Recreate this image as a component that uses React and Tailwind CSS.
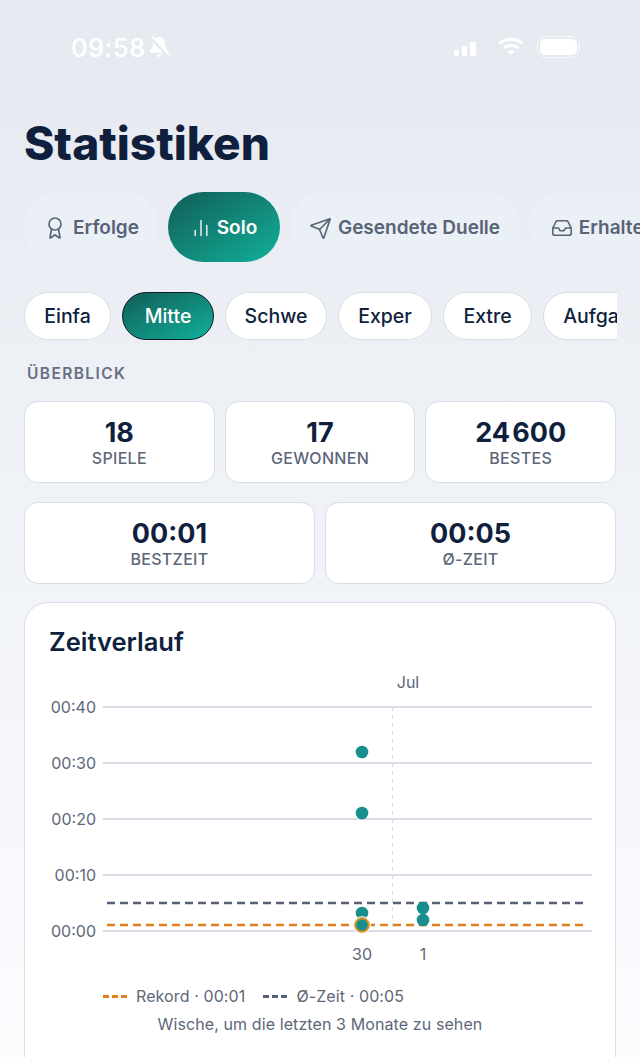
import React from 'react';
import { Award, ChartNoAxesColumn, Send, Inbox } from 'lucide-react';

const tabs = [
  { label: 'Erfolge', icon: Award, size: 24, width: 'w-[134px]' },
  { label: 'Solo', icon: ChartNoAxesColumn, size: 20, width: 'w-[112px]', active: true },
  { label: 'Gesendete Duelle', icon: Send, size: 23, width: 'w-[229px]' },
  { label: 'Erhalten', icon: Inbox, size: 22, width: 'w-[148px]' },
];

const chips = [
  { label: 'Einfa', width: 'w-[87px]' },
  { label: 'Mitte', width: 'w-[92px]', active: true },
  { label: 'Schwe', width: 'w-[102px]' },
  { label: 'Exper', width: 'w-[94px]' },
  { label: 'Extre', width: 'w-[89px]' },
  { label: 'Aufga', width: 'w-[96px]' },
];

const gridRows = [
  { y: 41, label: '00:40' },
  { y: 97, label: '00:30' },
  { y: 153, label: '00:20' },
  { y: 209, label: '00:10' },
  { y: 265, label: '00:00' },
];

const dots = [
  { x: 313, y: 86 },
  { x: 313, y: 147 },
  { x: 313, y: 247 },
  { x: 374, y: 242 },
  { x: 374, y: 254 },
];

function StatCard({ value, label }) {
  return (
    <div className="flex-1 h-[82px] bg-white rounded-[14px] border border-[#d8dee8] flex flex-col items-center justify-center">
      <div className="text-[27px] leading-[32px] font-bold text-[#0f1f3d]">{value}</div>
      <div className="text-[16px] leading-[19px] font-medium tracking-[0.3px] text-[#5d6779]">{label}</div>
    </div>
  );
}

function StatusBar() {
  return (
    <div className="h-[94px] pl-[71px] pr-[60px] flex items-center justify-between text-white blur-[0.6px]">
      <div className="flex items-center gap-[1px]">
        <span className="text-[26px] leading-none font-medium tracking-[0.2px] mt-[1px]">09:58</span>
        <svg width="26" height="26" viewBox="0 0 22 22" fill="white">
          <path d="M11 2.5c-3.2 0-5.2 2.4-5.2 5.6 0 3.6-1.3 5-2.6 6.5-.4.5-.1 1.2.6 1.2h14.4c.7 0 1-.7.6-1.2-1.3-1.5-2.6-2.9-2.6-6.5 0-3.2-2-5.6-5.2-5.6z" />
          <path d="M8.6 17.2h4.8c-.2 1.3-1.2 2.2-2.4 2.2s-2.2-.9-2.4-2.2z" />
          <path d="M3.5 2.5l15 16" stroke="#e7ebf1" strokeWidth="2.4" />
          <path d="M4.6 1.5l15 16" stroke="white" strokeWidth="1.4" />
        </svg>
      </div>
      <div className="flex items-center">
        <svg width="26" height="18" viewBox="0 0 26 18" fill="white" className="mt-[2px]">
          <rect x="1" y="11" width="5" height="6" rx="1.2" />
          <rect x="9" y="7" width="5" height="10" rx="1.2" />
          <rect x="17" y="3" width="6" height="14" rx="1.2" fillOpacity="0.95" />
        </svg>
        <svg width="28" height="20" viewBox="0 0 28 20" fill="none" stroke="white" strokeWidth="3" className="ml-[18px] -mt-[3px]">
          <path d="M2.5 7.5c6.5-5.6 16.5-5.6 23 0" />
          <path d="M7 12c4-3.4 10-3.4 14 0" />
          <path d="M14 19l-3.6-3.6c2-1.6 5.2-1.6 7.2 0z" fill="white" stroke="none" />
        </svg>
        <div className="w-[43px] h-[22px] rounded-[8px] border border-white/60 p-[2px] ml-[12px]">
          <div className="w-full h-full rounded-[5px] bg-white" />
        </div>
      </div>
    </div>
  );
}

function Chart() {
  return (
    <svg width="543" height="300" viewBox="0 0 543 300" className="block mt-[7px]">
      <text x="359" y="22" textAnchor="middle" fontSize="16" fill="#5d6779">Jul</text>
      {gridRows.map(r => (
        <g key={r.label}>
          <line x1="54" x2="543" y1={r.y} y2={r.y} stroke="#d6dce8" strokeWidth="2" />
          <text x="47" y={r.y + 6} textAnchor="end" fontSize="16" fill="#5d6779">{r.label}</text>
        </g>
      ))}
      <line x1="343.5" x2="343.5" y1="41" y2="262" stroke="#d6dce8" strokeWidth="1" strokeDasharray="4 4" />
      <line x1="58" x2="538" y1="237" y2="237" stroke="#565f75" strokeWidth="2.5" strokeDasharray="8 5" />
      <line x1="58" x2="538" y1="259" y2="259" stroke="#e07f1c" strokeWidth="2.5" strokeDasharray="8 5" />
      {dots.map(d => (
        <circle key={`${d.x}-${d.y}`} cx={d.x} cy={d.y} r="6.3" fill="#188f8c" />
      ))}
      <circle cx="313" cy="259" r="9" fill="white" fillOpacity="0.85" />
      <circle cx="313" cy="259" r="6.8" fill="#188f8c" stroke="#dd9224" strokeWidth="2" />
      <text x="313" y="294" textAnchor="middle" fontSize="16" fill="#5d6779">30</text>
      <text x="374" y="294" textAnchor="middle" fontSize="16" fill="#5d6779">1</text>
    </svg>
  );
}

function LegendDash({ color }) {
  return (
    <svg width="24" height="3" viewBox="0 0 24 3" className="mr-[9px]">
      <line x1="0" x2="24" y1="1.5" y2="1.5" stroke={color} strokeWidth="3" strokeDasharray="6 3" />
    </svg>
  );
}

export default function App() {
  return (
    <div className="w-[640px] h-[1057px] overflow-hidden [font-family:Inter,sans-serif] bg-gradient-to-b from-[#e5e9f0] to-[#fbfcfe]">
      <StatusBar />

      <h1 className="px-6 mt-[20px] text-[46px] leading-[58px] font-extrabold text-[#0f1f3d]">Statistiken</h1>

      <div className="flex gap-[10px] pl-6 mt-[20px] overflow-hidden">
        {tabs.map(t => {
          const Icon = t.icon;
          return (
            <div
              key={t.label}
              className={`${t.width} shrink-0 h-[70px] pt-[2px] rounded-[35px] flex items-center justify-center gap-[6px] text-[19px] font-semibold ${t.active ? 'bg-gradient-to-br from-[#105e58] to-[#10b19a] text-white' : 'bg-[#ebf0f6] text-[#596377]'}`}
            >
              <Icon size={t.size} strokeWidth={t.active ? 1.6 : 1.7} />
              <span>{t.label}</span>
            </div>
          );
        })}
      </div>

      <div className="flex gap-[11px] ml-6 mr-[23px] mt-[30px] overflow-hidden">
        {chips.map(c => (
          <div
            key={c.label}
            className={`${c.width} shrink-0 h-[48px] pt-[1px] rounded-[24px] flex items-center justify-center text-[19.5px] font-medium ${c.active ? 'bg-gradient-to-br from-[#105e58] to-[#10b19a] text-white border-[1.5px] border-[#0c1a24]' : 'bg-white text-[#0f1f3d] border border-[#d8dee8]'}`}
          >
            {c.label}
          </div>
        ))}
      </div>

      <div className="px-[27px] mt-[24px] text-[15.5px] leading-[20px] font-semibold tracking-[1.4px] text-[#666f83]">ÜBERBLICK</div>

      <div className="flex gap-[10px] px-6 mt-[17px]">
        <StatCard value="18" label="SPIELE" />
        <StatCard value="17" label="GEWONNEN" />
        <StatCard value={'24\u200a600'} label="BESTES" />
      </div>
      <div className="flex gap-[10px] px-6 mt-[19px]">
        <StatCard value="00:01" label="BESTZEIT" />
        <StatCard value="00:05" label="Ø-ZEIT" />
      </div>

      <div className="mx-6 mt-[18px] bg-white rounded-[24px] border border-[#d8dee8] pt-[22px] px-6 h-[480px]">
        <h2 className="text-[25.5px] leading-[34px] font-semibold text-[#0f1f3d]">Zeitverlauf</h2>
        <Chart />
        <div className="flex items-center pl-[54px] mt-[20px] text-[16px] tracking-[0.1px] leading-[20px] text-[#5d6779]">
          <LegendDash color="#e07f1c" />
          <span className="mr-[18px]">Rekord · 00:01</span>
          <LegendDash color="#565f75" />
          <span>Ø-Zeit · 00:05</span>
        </div>
        <div className="mt-[8px] text-center text-[16px] tracking-[0.1px] leading-[20px] text-[#5d6779]">Wische, um die letzten 3 Monate zu sehen</div>
      </div>
    </div>
  );
}
